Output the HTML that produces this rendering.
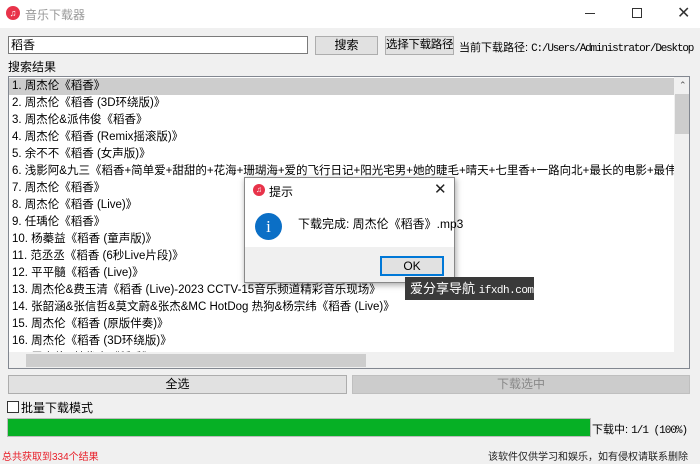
<!DOCTYPE html>
<html><head><meta charset="utf-8"><style>
*{margin:0;padding:0;box-sizing:border-box}
body{width:700px;height:464px;overflow:hidden;background:#f0f0f0;font-family:"Liberation Sans","Noto Sans CJK SC",sans-serif;font-size:12px;color:#000;position:relative}
.a{position:absolute;white-space:nowrap}
.btn{position:absolute;background:#e1e1e1;border:1px solid #adadad;text-align:center;font-size:12px;white-space:nowrap;overflow:hidden}
.row{height:17px;line-height:17px;padding-left:3px;white-space:nowrap;font-size:11.5px}
</style></head><body>
<div class="a" style="left:0;top:0;width:700px;height:28px;background:#fff"></div>
<div class="a" style="left:6px;top:6px;width:14px;height:14px;border-radius:50%;background:#e8334a;color:#fff;font-size:9px;text-align:center;line-height:14px">♫</div>
<div class="a" style="left:25px;top:6px;color:#999;font-size:12px">音乐下载器</div>
<div class="a" style="left:585px;top:13px;width:10px;height:1px;background:#333"></div>
<div class="a" style="left:632px;top:8px;width:10px;height:10px;border:1px solid #333"></div>
<div class="a" style="left:677px;top:3px;font-size:16px;color:#333">✕</div>

<div class="a" style="left:8px;top:36px;width:300px;height:18px;background:#fff;border:1px solid #7a7a7a;padding-left:2px;line-height:16px">稻香</div>
<div class="btn" style="left:315px;top:36px;width:63px;height:19px;line-height:17px">搜索</div>
<div class="btn" style="left:385px;top:36px;width:69px;height:19px;line-height:17px;font-size:11.5px;letter-spacing:-0.3px">选择下载路径</div>
<div class="a" style="left:459px;top:39px;font-size:11px">当前下载路径: <span style="font-family:'Liberation Mono',monospace;letter-spacing:-1.2px">C:/Users/Administrator/Desktop</span></div>
<div class="a" style="left:8px;top:58px">搜索结果</div>

<div class="a" style="left:8px;top:76px;width:682px;height:293px;background:#fff;border:1px solid #828790;overflow:hidden">
<div style="padding-top:1px">
<div class="row" style="background:#cdcdcd;width:665px">1. 周杰伦《稻香》</div>
<div class="row">2. 周杰伦《稻香 (3D环绕版)》</div>
<div class="row">3. 周杰伦&amp;派伟俊《稻香》</div>
<div class="row">4. 周杰伦《稻香 (Remix摇滚版)》</div>
<div class="row">5. 余不不《稻香 (女声版)》</div>
<div class="row">6. 浅影阿&amp;九三《稻香+简单爱+甜甜的+花海+珊瑚海+爱的飞行日记+阳光宅男+她的睫毛+晴天+七里香+一路向北+最长的电影+最伟大的作品》</div>
<div class="row">7. 周杰伦《稻香》</div>
<div class="row">8. 周杰伦《稻香 (Live)》</div>
<div class="row">9. 任瑀伦《稻香》</div>
<div class="row">10. 杨蓁益《稻香 (童声版)》</div>
<div class="row">11. 范丞丞《稻香 (6秒Live片段)》</div>
<div class="row">12. 平平髓《稻香 (Live)》</div>
<div class="row">13. 周杰伦&amp;费玉清《稻香 (Live)-2023 CCTV-15音乐频道精彩音乐现场》</div>
<div class="row">14. 张韶涵&amp;张信哲&amp;莫文蔚&amp;张杰&amp;MC HotDog 热狗&amp;杨宗纬《稻香 (Live)》</div>
<div class="row">15. 周杰伦《稻香 (原版伴奏)》</div>
<div class="row">16. 周杰伦《稻香 (3D环绕版)》</div>
<div class="row">17. 周杰伦&amp;林俊杰《稻香》</div>
</div>
<div class="a" style="left:665px;top:0;width:16px;height:275px;background:#f0f0f0"></div>
<div class="a" style="left:670px;top:3px;font-size:9px;color:#555">⌃</div>
<div class="a" style="left:666px;top:17px;width:14px;height:40px;background:#cdcdcd"></div>
<div class="a" style="left:0;top:275px;width:681px;height:17px;background:#f0f0f0"></div>
<div class="a" style="left:17px;top:277px;width:340px;height:13px;background:#cdcdcd"></div>
</div>

<div class="btn" style="left:8px;top:375px;width:339px;height:19px;line-height:17px">全选</div>
<div class="btn" style="left:352px;top:375px;width:338px;height:19px;line-height:17px;background:#cccccc;border-color:#bfbfbf;color:#888">下载选中</div>
<div class="a" style="left:7px;top:401px;width:12px;height:12px;border:1px solid #333;background:#fff"></div>
<div class="a" style="left:21px;top:399px">批量下载模式</div>
<div class="a" style="left:7px;top:418px;width:584px;height:19px;background:#e6e6e6;border:1px solid #bcbcbc"><div style="width:100%;height:100%;background:#06b025"></div></div>
<div class="a" style="left:592px;top:421px;font-size:11px">下载中: <span style="font-family:'Liberation Mono',monospace;letter-spacing:-1px">1/1 (100%)</span></div>
<div class="a" style="left:2px;top:448px;color:#e8202a;font-size:10px">总共获取到334个结果</div>
<div class="a" style="left:488px;top:448px;font-size:10px;color:#222">该软件仅供学习和娱乐，如有侵权请联系删除</div>

<div class="a" style="left:244px;top:177px;width:211px;height:106px;background:#fff;border:1px solid #888;box-shadow:1px 2px 6px rgba(0,0,0,.35)">
<div class="a" style="left:8px;top:6px;width:12px;height:12px;border-radius:50%;background:#e8334a;color:#fff;font-size:8px;text-align:center;line-height:12px">♫</div>
<div class="a" style="left:24px;top:5px">提示</div>
<div class="a" style="left:189px;top:2px;font-size:15px;color:#222">✕</div>
<div class="a" style="left:10px;top:35px;width:27px;height:27px;border-radius:50%;background:#0b6fc6;color:#fff;text-align:center;line-height:27px;font-size:17px;font-family:'Liberation Serif',serif">i</div>
<div class="a" style="left:53px;top:37px">下载完成: 周杰伦《稻香》.mp3</div>
<div class="a" style="left:0;top:69px;width:209px;height:35px;background:#f0f0f0"></div>
<div class="btn" style="left:135px;top:78px;width:64px;height:20px;line-height:17px;border:2px solid #0078d7">OK</div>
</div>

<div class="a" style="left:405px;top:277px;width:129px;height:23px;background:#3a3a3a;color:#fff;font-size:13px;line-height:23px;padding-left:5px;overflow:hidden">爱分享导航 <span style="font-family:'Liberation Mono',monospace;font-size:11px;letter-spacing:-0.5px">ifxdh.com</span></div>
</body></html>
